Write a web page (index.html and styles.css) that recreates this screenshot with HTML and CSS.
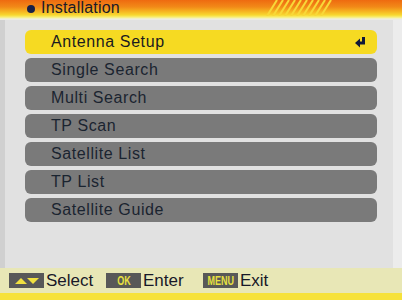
FILE: index.html
```html
<!DOCTYPE html>
<html lang="en">
<head>
  <meta charset="UTF-8">
  <title>Installation</title>
  <link rel="stylesheet" href="styles.css">
</head>
<body>
  <div class="tela">
    <div class="topo">
      <span class="ponto"></span>
      <span class="titulo">Installation</span>
      <svg class="listras" width="72" height="16" viewBox="0 0 72 16">
        <g stroke="#f8d838" stroke-width="2">
          <line x1="2" y1="16" x2="12" y2="0"/>
          <line x1="8" y1="16" x2="18" y2="0"/>
          <line x1="14" y1="16" x2="24" y2="0"/>
          <line x1="20" y1="16" x2="30" y2="0"/>
          <line x1="26" y1="16" x2="36" y2="0"/>
          <line x1="32" y1="16" x2="42" y2="0"/>
          <line x1="38" y1="16" x2="48" y2="0"/>
          <line x1="44" y1="16" x2="54" y2="0"/>
          <line x1="50" y1="16" x2="60" y2="0"/>
          <line x1="56" y1="16" x2="66" y2="0"/>
        </g>
      </svg>
    </div>

    <div class="meio">
      <div class="menu">
        <div class="item ativo">
          <span>Antenna Setup</span>
          <svg class="enter" width="13" height="12" viewBox="0 0 13 12">
            <path d="M9.5 1 V7 H5" fill="none" stroke="#101838" stroke-width="3"/>
            <path d="M1 7 L6 2.5 V11.5 Z" fill="#101838"/>
          </svg>
        </div>
        <div class="item"><span>Single Search</span></div>
        <div class="item"><span>Multi Search</span></div>
        <div class="item"><span>TP Scan</span></div>
        <div class="item"><span>Satellite List</span></div>
        <div class="item"><span>TP List</span></div>
        <div class="item"><span>Satellite Guide</span></div>
      </div>
    </div>

    <div class="rodape">
      <div class="dica">
        <span class="tecla">
          <svg width="26" height="8" viewBox="0 0 26 8">
            <path d="M1 7 L7 1 L13 7 Z" fill="#f0e040"/>
            <path d="M13 1 L25 1 L19 7 Z" fill="#f0e040"/>
          </svg>
        </span>
        <span>Select</span>
      </div>
      <div class="dica">
        <span class="tecla"><span class="rotulo">OK</span></span>
        <span>Enter</span>
      </div>
      <div class="dica">
        <span class="tecla"><span class="rotulo">MENU</span></span>
        <span>Exit</span>
      </div>
    </div>
    <div class="faixa"></div>
  </div>
</body>
</html>
```

FILE: styles.css
```css
body {
  margin: 0;
  font-family: "Liberation Sans", Arial, sans-serif;
  background: #e2e2e2;
}
.tela {
  width: 402px;
  height: 300px;
  display: flex;
  flex-direction: column;
  overflow: hidden;
}
.topo {
  height: 20px;
  display: flex;
  align-items: flex-start;
  background: linear-gradient(to bottom, #ee6a10 0, #f28a18 7px, #f6b020 11px, #f8d830 15px, #f8ee70 17px, #f0f0e0 19px, #e8e8e8 20px);
}
.ponto {
  width: 8px;
  height: 8px;
  border-radius: 50%;
  background: #182048;
  margin: 5px 6px 0 27px;
}
.titulo {
  font-size: 16px;
  line-height: 16px;
  color: #1a1a28;
  letter-spacing: 0.2px;
}
.listras {
  margin-left: 145px;
  display: block;
}
.meio {
  flex: 1;
  display: flex;
  border-left: 5px solid #d0d0d0;
  border-right: 9px solid #ececec;
  background: #e1e1e1;
}
.menu {
  flex: 1;
  display: flex;
  flex-direction: column;
  gap: 4px;
  padding: 10px 16px 0 20px;
}
.item {
  height: 24px;
  border-radius: 6px;
  background: #7a7a7a;
  display: flex;
  align-items: center;
  justify-content: space-between;
  padding: 0 10px 0 26px;
  font-size: 16px;
  color: #1a2430;
  letter-spacing: 0.6px;
}
.item.ativo {
  background: #f6da22;
  color: #1a1a20;
}
.enter {
  display: block;
}
.rodape {
  height: 25px;
  background: #e8e7b6;
  display: flex;
  align-items: center;
  padding-left: 9px;
}
.dica {
  display: flex;
  align-items: center;
  gap: 2px;
  font-size: 17px;
  color: #181828;
}
.dica:nth-child(1) { width: 97px; }
.dica:nth-child(2) { width: 97px; }
.tecla {
  width: 35px;
  height: 15px;
  background: #585858;
  display: flex;
  align-items: center;
  justify-content: center;
}
.tecla svg {
  display: block;
}
.rotulo {
  font-size: 12px;
  font-weight: bold;
  color: #e8e040;
  transform: scaleX(0.75);
}
.faixa {
  height: 7px;
  background: #f6e23a;
}
```
